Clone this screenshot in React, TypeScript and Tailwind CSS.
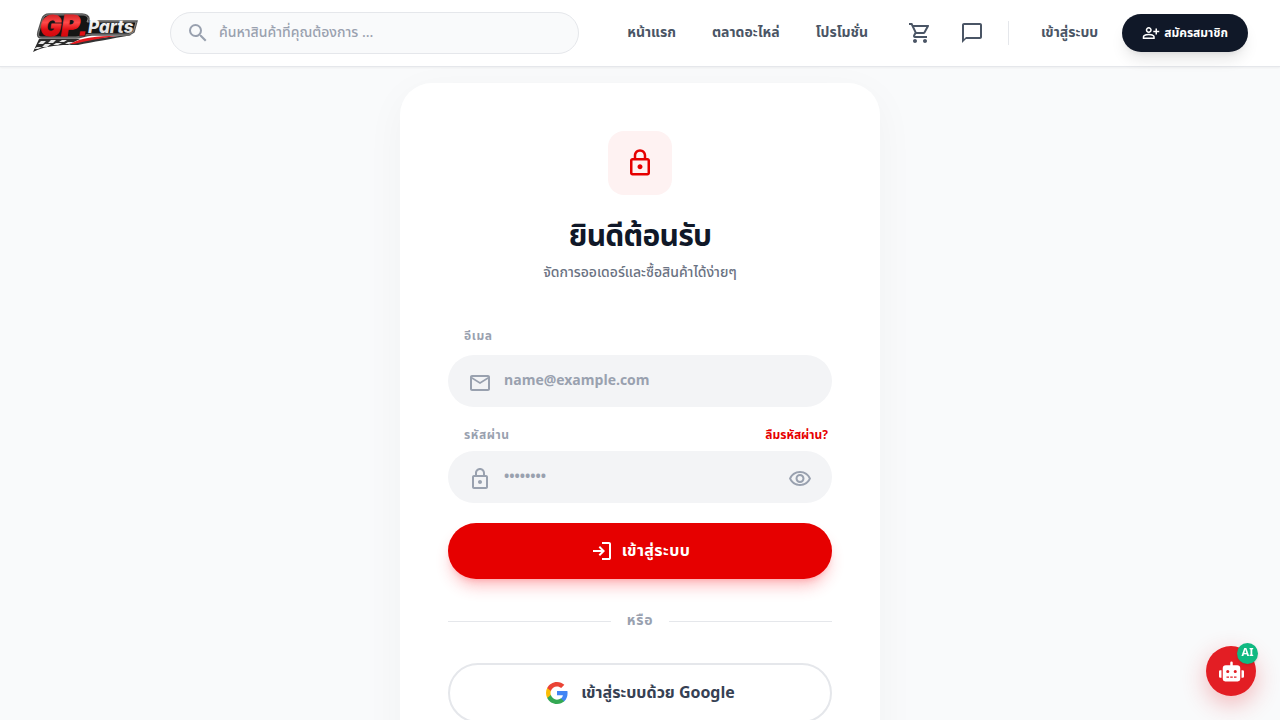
import { useState } from 'react';
import { FaRobot } from 'react-icons/fa';
import {
  MdChatBubbleOutline,
  MdOutlineEmail,
  MdOutlineLock,
  MdOutlineShoppingCart,
  MdOutlineVisibility,
  MdSearch,
} from 'react-icons/md';

const NAV_LINKS = ['หน้าแรก', 'ตลาดอะไหล่', 'โปรโมชั่น'];

function Logo() {
  return (
    <svg
      viewBox="0 0 106 42"
      className="h-[42px] w-[106px] shrink-0 overflow-visible"
      role="img"
      aria-label="GP Parts"
    >
      <defs>
        <linearGradient id="logo-red" x1="0" y1="0" x2="0" y2="1">
          <stop offset="0" stopColor="#b5080d" />
          <stop offset="0.4" stopColor="#ff4a4a" />
          <stop offset="0.6" stopColor="#e01015" />
          <stop offset="1" stopColor="#c90006" />
        </linearGradient>
        <linearGradient id="logo-silver" x1="0" y1="0" x2="0" y2="1">
          <stop offset="0" stopColor="#ffffff" />
          <stop offset="1" stopColor="#d4d4d4" />
        </linearGradient>
      </defs>
      {/* checkered tail */}
      <path d="M7 27 L48 27 L36 33 C22 33 11 35 1 40 Z" fill="#2a2a2a" />
      <path
        d="M9 29h5l-3 3h-5zM19 28h5l-3 3h-5zM30 28h5l-3 2h-5zM13 32h6l-4 3h-5zM24 31h6l-4 2h-5zM5 35h5l-4 2h-4zM36 30h6l-5 2h-4z"
        fill="#e5e5e5"
      />
      {/* swoosh under the letters */}
      <path d="M36 33 C50 27 74 25 100 23 C78 27 61 30 46 33 Z" fill="#333" />
      <path d="M38 32 C50 25 66 24 84 24 C68 26 54 29 42 32 Z" fill="#e51a1f" />
      {/* plate behind the letters */}
      <path
        d="M17 2 H50 C54 2 57 4 57 7 L56 9 H105 L102 20 L97 23 H60 C53 23 49 26 44 26 H10 C6 26 5 24 6 20 L10 7 C11 4 13 2 17 2 Z"
        fill="#151515"
        stroke="#555"
        strokeWidth="1.500"
      />
      <path
        d="M17 3 H50 C54 3 56 5 56 7 L55 10 H104 L101 20 L97 22 H60 C53 22 49 25 44 25 H10 C7 25 6 24 7 20 L11 7 C12 4 14 3 17 3 Z"
        fill="none"
        stroke="#b8b8b8"
        strokeWidth="0.600"
      />
      <text
        x="8"
        y="24"
        fontFamily="Inter, sans-serif"
        fontSize="28"
        fontWeight="900"
        fontStyle="italic"
        fill="url(#logo-red)"
        stroke="url(#logo-red)"
        strokeWidth="1"
      >
        GP
      </text>
      <path d="M48 19h6l-1 5h-6z" fill="#e01015" stroke="#151515" strokeWidth="0.600" />
      <text
        x="56"
        y="21"
        fontFamily="Inter, sans-serif"
        fontSize="17"
        fontWeight="800"
        fontStyle="italic"
        fill="url(#logo-silver)"
      >
        Parts
      </text>
    </svg>
  );
}

function PersonAddIcon() {
  return (
    <svg viewBox="0 -960 960 960" fill="currentColor" className="size-[18px] shrink-0" aria-hidden="true">
      <path d="M720-400v-120H600v-80h120v-120h80v120h120v80H800v120h-80Zm-360-80q-66 0-113-47t-47-113q0-66 47-113t113-47q66 0 113 47t47 113q0 66-47 113t-113 47ZM40-160v-112q0-34 17.500-62.500T104-378q62-31 126-46.500T360-440q66 0 130 15.500T616-378q29 15 46.500 43.500T680-272v112H40Zm80-80h480v-32q0-11-5.500-20T580-306q-54-27-109-40.500T360-360q-56 0-111 13.500T140-306q-9 5-14.500 14t-5.500 20v32Zm240-320q33 0 56.500-23.500T440-640q0-33-23.500-56.500T360-720q-33 0-56.500 23.500T280-640q0 33 23.500 56.500T360-560Z" />
    </svg>
  );
}

function LoginIcon() {
  return (
    <svg viewBox="0 -960 960 960" fill="currentColor" className="size-6 shrink-0" aria-hidden="true">
      <path d="M480-120v-80h280v-560H480v-80h280q33 0 56.500 23.500T840-760v560q0 33-23.500 56.500T760-120H480Zm-80-160-55-58 102-102H120v-80h327L345-622l55-58 200 200-200 200Z" />
    </svg>
  );
}

function GoogleIcon() {
  return (
    <svg viewBox="0 0 24 24" className="size-6 shrink-0" aria-hidden="true">
      <path
        fill="#4285F4"
        d="M22.560 12.250c0-.78-.07-1.530-.2-2.250H12v4.260h5.920c-.26 1.370-1.040 2.530-2.210 3.310v2.770h3.570c2.080-1.920 3.280-4.740 3.280-8.090z"
      />
      <path
        fill="#34A853"
        d="M12 23c2.970 0 5.460-.98 7.280-2.660l-3.570-2.770c-.98.66-2.230 1.060-3.710 1.060-2.860 0-5.290-1.930-6.160-4.530H2.180v2.840C3.990 20.530 7.700 23 12 23z"
      />
      <path
        fill="#FBBC05"
        d="M5.840 14.090c-.22-.66-.35-1.360-.35-2.090s.13-1.430.35-2.090V7.070H2.180C1.430 8.550 1 10.220 1 12s.43 3.450 1.180 4.930l3.660-2.840z"
      />
      <path
        fill="#EA4335"
        d="M12 5.380c1.620 0 3.060.56 4.210 1.640l3.150-3.150C17.450 2.090 14.970 1 12 1 7.700 1 3.990 3.470 2.180 7.070l3.660 2.840c.87-2.600 3.300-4.530 6.160-4.530z"
      />
    </svg>
  );
}

function Header() {
  return (
    <header className="sticky top-0 z-10 flex items-center gap-8 border-b border-gray-200 bg-white px-8 py-3 shadow-xs">
      <a href="#">
        <Logo />
      </a>

      <div className="relative flex-1">
        <MdSearch className="absolute left-4 top-[9px] size-6 text-gray-400" />
        <input
          type="search"
          aria-label="ค้นหาสินค้า"
          placeholder="ค้นหาสินค้าที่คุณต้องการ ..."
          className="block h-[42px] w-full rounded-full border border-gray-200 bg-gray-50 pb-0.5 pl-12 pr-4 text-sm font-medium text-gray-700 placeholder:text-gray-400"
        />
      </div>

      <div className="flex items-center">
        <nav className="flex items-center gap-1 text-sm font-bold text-gray-600">
          {NAV_LINKS.map((label) => (
            <a key={label} href="#" className="px-4 py-2">
              {label}
            </a>
          ))}
        </nav>
        <div className="ml-6 flex items-center gap-7 text-gray-600">
          <button type="button" aria-label="ตะกร้า">
            <MdOutlineShoppingCart className="size-6" />
          </button>
          <button type="button" aria-label="แชท">
            <MdChatBubbleOutline className="size-6" />
          </button>
        </div>
        <div className="ml-6 h-6 w-px bg-gray-200" />
        <a href="#" className="ml-8 text-sm font-bold text-gray-600">
          เข้าสู่ระบบ
        </a>
        <button
          type="button"
          className="ml-6 flex h-[38px] items-center gap-1 rounded-full bg-gray-900 px-5 text-xs font-bold text-white shadow-lg"
        >
          <PersonAddIcon />
          สมัครสมาชิก
        </button>
      </div>
    </header>
  );
}

function LoginCard() {
  const [showPassword, setShowPassword] = useState(false);

  return (
    <div className="w-full max-w-[480px] rounded-4xl bg-white p-12 shadow-[0_10px_40px_rgba(0,0,0,0.04)]">
      <div className="flex flex-col items-center text-center">
        <div className="flex size-16 items-center justify-center rounded-2xl bg-red-50 text-[#e60000]">
          <MdOutlineLock className="size-[30px]" />
        </div>
        <h1 className="mt-6 text-3xl font-bold tracking-tight text-gray-900">ยินดีต้อนรับ</h1>
        <p className="mt-2 text-sm font-medium text-gray-500">จัดการออเดอร์และซื้อสินค้าได้ง่ายๆ</p>
      </div>

      <form className="mt-10 space-y-5" onSubmit={(e) => e.preventDefault()}>
        <div>
          <label htmlFor="email" className="pl-4 text-xs font-bold tracking-wider text-gray-400">
            อีเมล
          </label>
          <div className="relative mt-2">
            <MdOutlineEmail className="absolute left-5 top-4 size-6 text-gray-400" />
            <input
              id="email"
              type="email"
              placeholder="name@example.com"
              className="block h-[52px] w-full rounded-full bg-gray-100 pb-0.5 pl-14 pr-5 text-sm font-bold text-gray-900 placeholder:text-gray-400"
            />
          </div>
        </div>

        <div>
          <div className="flex items-center justify-between pl-4 pr-1 text-xs font-bold">
            <label htmlFor="password" className="tracking-wider text-gray-400">
              รหัสผ่าน
            </label>
            <a href="#" className="text-[#e60000]">
              ลืมรหัสผ่าน?
            </a>
          </div>
          <div className="relative mt-2">
            <MdOutlineLock className="absolute left-5 top-4 size-6 text-gray-400" />
            <input
              id="password"
              type={showPassword ? 'text' : 'password'}
              placeholder="••••••••"
              className="block h-[52px] w-full rounded-full bg-gray-100 px-14 pb-0.5 text-sm font-bold text-gray-900 placeholder:text-gray-400"
            />
            <button
              type="button"
              aria-label="แสดงรหัสผ่าน"
              onClick={() => setShowPassword(!showPassword)}
              className="absolute right-5 top-4 text-gray-400"
            >
              <MdOutlineVisibility className="size-6" />
            </button>
          </div>
        </div>

        <button
          type="submit"
          className="flex h-14 w-full items-center justify-center gap-2 rounded-full bg-[#e60000] text-base font-bold tracking-wide text-white shadow-lg shadow-red-500/30"
        >
          <LoginIcon />
          เข้าสู่ระบบ
        </button>
      </form>

      <div className="my-8 flex items-center gap-4">
        <div className="h-px flex-1 bg-gray-200" />
        <span className="text-sm font-bold tracking-wider text-gray-400">หรือ</span>
        <div className="h-px flex-1 bg-gray-200" />
      </div>

      <button
        type="button"
        className="flex h-[60px] w-full items-center justify-center gap-3 rounded-full border-2 border-gray-200 bg-white text-base font-bold text-gray-700"
      >
        <GoogleIcon />
        เข้าสู่ระบบด้วย Google
      </button>
    </div>
  );
}

function AiButton() {
  return (
    <button
      type="button"
      aria-label="ผู้ช่วย AI"
      className="fixed bottom-6 right-6 flex size-[50px] items-center justify-center rounded-full bg-[#e31e24] text-white shadow-[0_8px_24px_rgba(227,30,36,0.3)]"
    >
      <FaRobot className="size-[25px]" />
      <span className="absolute -right-0.5 -top-[3px] flex size-[21px] items-center justify-center rounded-full bg-[#10b981] text-[11px] font-bold shadow-sm">
        AI
      </span>
    </button>
  );
}

export default function App() {
  return (
    <div className="min-h-screen bg-gray-50 font-['Noto_Sans_Thai','Noto_Sans',sans-serif]">
      <Header />
      <main className="flex justify-center px-4 py-4">
        <LoginCard />
      </main>
      <AiButton />
    </div>
  );
}
